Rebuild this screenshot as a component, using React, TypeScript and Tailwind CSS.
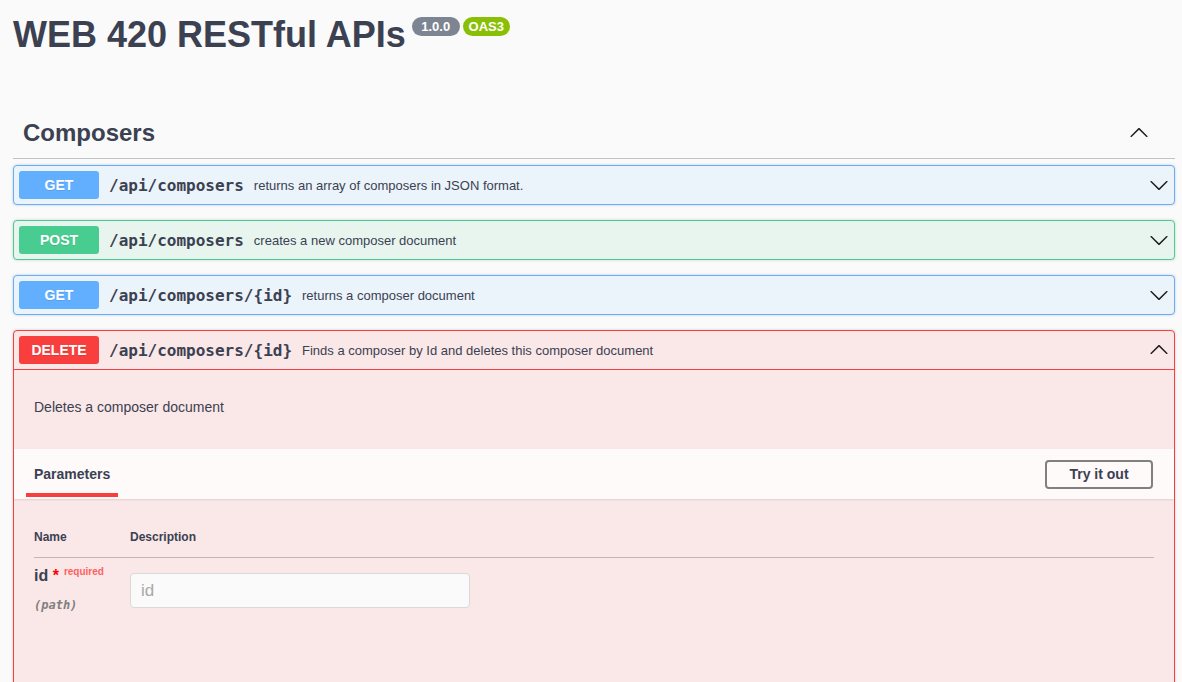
import React from 'react'

type Op = {
  method: string
  path: string
  summary: string
  badge: string
  border: string
  bg: string
}

const ops: Op[] = [
  { method: 'GET', path: '/api/composers', summary: 'returns an array of composers in JSON format.', badge: 'bg-[#61affe]', border: 'border-[#61affe]', bg: 'bg-[#ebf3fb]' },
  { method: 'POST', path: '/api/composers', summary: 'creates a new composer document', badge: 'bg-[#49cc90]', border: 'border-[#49cc90]', bg: 'bg-[#e8f5ef]' },
  { method: 'GET', path: '/api/composers/{id}', summary: 'returns a composer document', badge: 'bg-[#61affe]', border: 'border-[#61affe]', bg: 'bg-[#ebf3fb]' },
]

function Arrow({ up = false, className = '' }: { up?: boolean; className?: string }) {
  return (
    <svg
      width="20"
      height="20"
      viewBox="0 0 20 20"
      className={`${up ? 'rotate-180' : ''} ${className}`}
      fill="#1f1f1f"
    >
      <path d="M17.418 6.109c.272-.268.709-.268.979 0s.271.701 0 .969l-7.908 7.83c-.27.268-.707.268-.979 0l-7.908-7.83c-.27-.268-.27-.701 0-.969.271-.268.709-.268.979 0L10 13.25l7.418-7.141z" />
    </svg>
  )
}

function Summary({ op, up }: { op: Op; up?: boolean }) {
  return (
    <div className="flex items-center h-[38px] px-[5px]">
      <div
        className={`${op.badge} w-[80px] h-[28px] rounded-[3px] flex items-center justify-center text-white text-[14px] font-bold [text-shadow:0_1px_0_rgba(0,0,0,0.1)]`}
      >
        {op.method}
      </div>
      <span className="px-[10px] pt-[1px] font-['DejaVu_Sans_Mono',monospace] font-bold text-[16px] text-[#3b4151]">
        {op.path}
      </span>
      <span className="pt-[1px] text-[13px] text-[#3b4151] flex-1">{op.summary}</span>
      <Arrow up={up} />
    </div>
  )
}

export default function App() {
  const del: Op = {
    method: 'DELETE',
    path: '/api/composers/{id}',
    summary: 'Finds a composer by Id and deletes this composer document',
    badge: 'bg-[#f93e3e]',
    border: 'border-[#f93e3e]',
    bg: 'bg-[#fae7e7]',
  }

  return (
    <div className="min-h-screen w-[1182px] bg-[#fafafa] font-['Liberation_Sans',Arial,sans-serif] text-[#3b4151] overflow-hidden">
      <div className="pl-[13px] pr-[7px] h-[682px] overflow-hidden">
        {/* title */}
        <div className="flex items-start pt-[13px]">
          <h2 className="text-[36px] font-bold leading-[44px]">WEB 420 RESTful APIs</h2>
          <div className="flex gap-[3px] ml-[6px] mt-[4px]">
            <span className="h-[19px] w-[48px] rounded-full bg-[#7d8492] text-white text-[13px] font-bold flex items-center justify-center">1.0.0</span>
            <span className="h-[19px] w-[47px] rounded-full bg-[#89bf04] text-white text-[13px] font-bold flex items-center justify-center">OAS3</span>
          </div>
        </div>

        {/* tag */}
        <div className="mt-[51px] h-[51px] flex items-center justify-between pl-[10px] pr-[26px] border-b border-[#3b4151]/30">
          <h3 className="text-[24px] font-bold leading-[30px]">Composers</h3>
          <Arrow up />
        </div>

        <div className="mt-[6px]">
          {ops.map((op, i) => (
            <div
              key={i}
              className={`mb-[15px] border ${op.border} ${op.bg} rounded-[4px] shadow-[0_0_3px_rgba(0,0,0,0.19)]`}
            >
              <Summary op={op} />
            </div>
          ))}

          <div className={`border ${del.border} ${del.bg} rounded-t-[4px] shadow-[0_0_3px_rgba(0,0,0,0.19)] h-[400px]`}>
            <div className={`border-b ${del.border}`}>
              <Summary op={del} up />
            </div>

            <div className="h-[79px] pt-[27px] px-[20px] text-[14px] leading-[20px]">Deletes a composer document</div>

            <div className="h-[50px] bg-white/80 shadow-[0_1px_2px_rgba(0,0,0,0.1)] flex items-center justify-between px-[20px]">
              <div className="relative self-stretch flex items-center">
                <span className="text-[14px] font-bold">Parameters</span>
                <div className="absolute bottom-[2px] -left-[8px] -right-[8px] h-[4px] bg-[#f93e3e]" />
              </div>
              <button className="w-[108px] h-[29px] mr-[1px] border-2 border-[#808080] rounded-[4px] text-[14px] font-bold text-[#3b4151] bg-transparent">
                Try it out
              </button>
            </div>

            <div className="px-[20px]">
              <div className="flex pt-[30px] pb-[12px] border-b border-[#3b4151]/30 text-[12px] font-bold leading-[16px]">
                <div className="w-[96px]">Name</div>
                <div>Description</div>
              </div>
              <div className="flex items-start pt-[8px]">
                <div className="w-[96px]">
                  <div className="text-[16px] font-bold leading-[20px] whitespace-nowrap">
                    id
                    <span className="text-[#ff0000]"> *</span>
                    <span className="relative top-[-6px] pl-[5px] text-[10px] text-[#ff0000]/60">required</span>
                  </div>
                  <div className="mt-[9px] font-['DejaVu_Sans_Mono',monospace] italic font-bold text-[12px] leading-[16px] text-[#808080]">
                    (path)
                  </div>
                </div>
                <input
                  placeholder="id"
                  className="mt-[7px] w-[340px] h-[35px] px-[10px] bg-[#fafafa] border border-[#d9d9d9] rounded-[4px] text-[17px] placeholder:text-[#a8a8a8] outline-none"
                />
              </div>
            </div>
          </div>
        </div>
      </div>
    </div>
  )
}
